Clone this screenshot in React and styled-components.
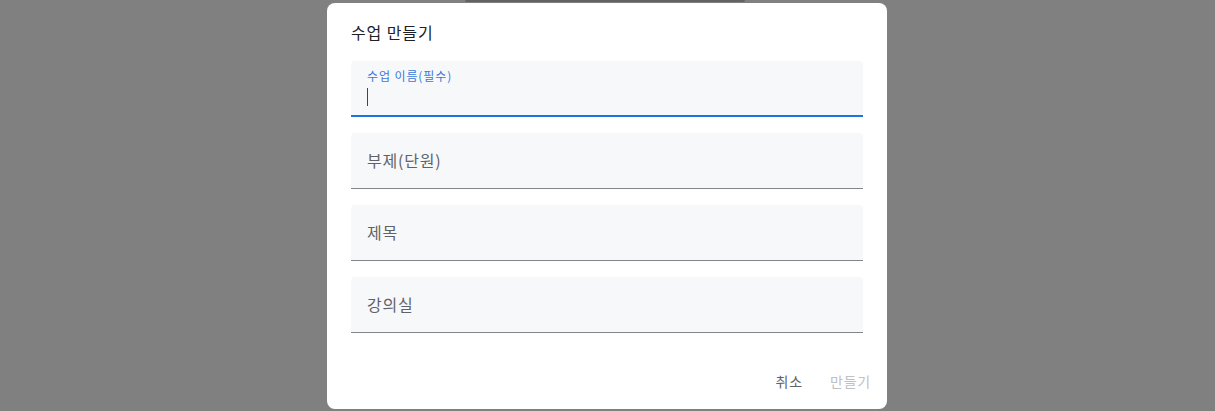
import styled, { createGlobalStyle } from 'styled-components'

const GlobalStyle = createGlobalStyle`
  html, body {
    margin: 0;
    padding: 0;
    background: #808080;
    font-family: "Noto Sans CJK KR", "Noto Sans", sans-serif;
  }
`

const fields = [
  { label: '수업 이름(필수)', focused: true },
  { label: '부제(단원)' },
  { label: '제목' },
  { label: '강의실' },
]

function App() {
  return (
    <Scrim>
      <GlobalStyle />
      <BehindBar />
      <Dialog>
        <Title>수업 만들기</Title>
        <Fields>
          {fields.map((f) => (
            <Field key={f.label} focused={f.focused}>
              {f.focused ? (
                <>
                  <FloatLabel>{f.label}</FloatLabel>
                  <Caret />
                </>
              ) : (
                <Placeholder>{f.label}</Placeholder>
              )}
            </Field>
          ))}
        </Fields>
        <Actions>
          <Button>취소</Button>
          <Button disabled>만들기</Button>
        </Actions>
      </Dialog>
    </Scrim>
  )
}

const Scrim = styled.div`
  height: 411px;
  display: flex;
  flex-direction: column;
  align-items: center;
  overflow: hidden;
`

const BehindBar = styled.div`
  width: 280px;
  height: 2px;
  margin-left: -5px;
  background: #626262;
  border-radius: 0 0 3px 3px;
`

const Dialog = styled.div`
  width: 560px;
  margin-top: 1px;
  margin-left: -1px;
  background: #fff;
  border-radius: 8px;
  box-sizing: border-box;
  padding: 17px 0 10px;
  display: flex;
  flex-direction: column;
`

const Title = styled.h2`
  margin: 0 24px;
  font-size: 16px;
  line-height: 24px;
  font-weight: 400;
  letter-spacing: 0.9px;
  color: #202124;
`

const Fields = styled.div`
  margin: 17px 24px 0;
  display: flex;
  flex-direction: column;
  gap: 16px;
`

const Field = styled.div`
  height: 56px;
  box-sizing: border-box;
  background: #f7f8fa;
  border-radius: 4px 4px 0 0;
  border-bottom: ${(p) => (p.focused ? '2px solid #1a73e8' : '1px solid #80868b')};
  padding: 0 16px;
  display: flex;
  flex-direction: column;
  justify-content: ${(p) => (p.focused ? 'flex-start' : 'center')};
`

const FloatLabel = styled.span`
  margin-top: 7px;
  font-size: 12px;
  line-height: 16px;
  letter-spacing: 0.9px;
  color: #3b78d8;
`

const Caret = styled.span`
  margin-top: 4px;
  width: 1px;
  height: 18px;
  background: #2c4a6e;
`

const Placeholder = styled.span`
  font-size: 16px;
  line-height: 24px;
  letter-spacing: 0.8px;
  color: #5f6368;
  margin-bottom: 1px;
`

const Actions = styled.div`
  margin-top: 30px;
  padding-right: 8px;
  display: flex;
  justify-content: flex-end;
  gap: 11px;
`

const Button = styled.button`
  height: 36px;
  padding: 0 8px;
  border: none;
  background: transparent;
  font-family: inherit;
  font-size: 14px;
  letter-spacing: 0.8px;
  color: ${(p) => (p.disabled ? '#bdc1c6' : '#5f6368')};
  cursor: ${(p) => (p.disabled ? 'default' : 'pointer')};
`

export default App
